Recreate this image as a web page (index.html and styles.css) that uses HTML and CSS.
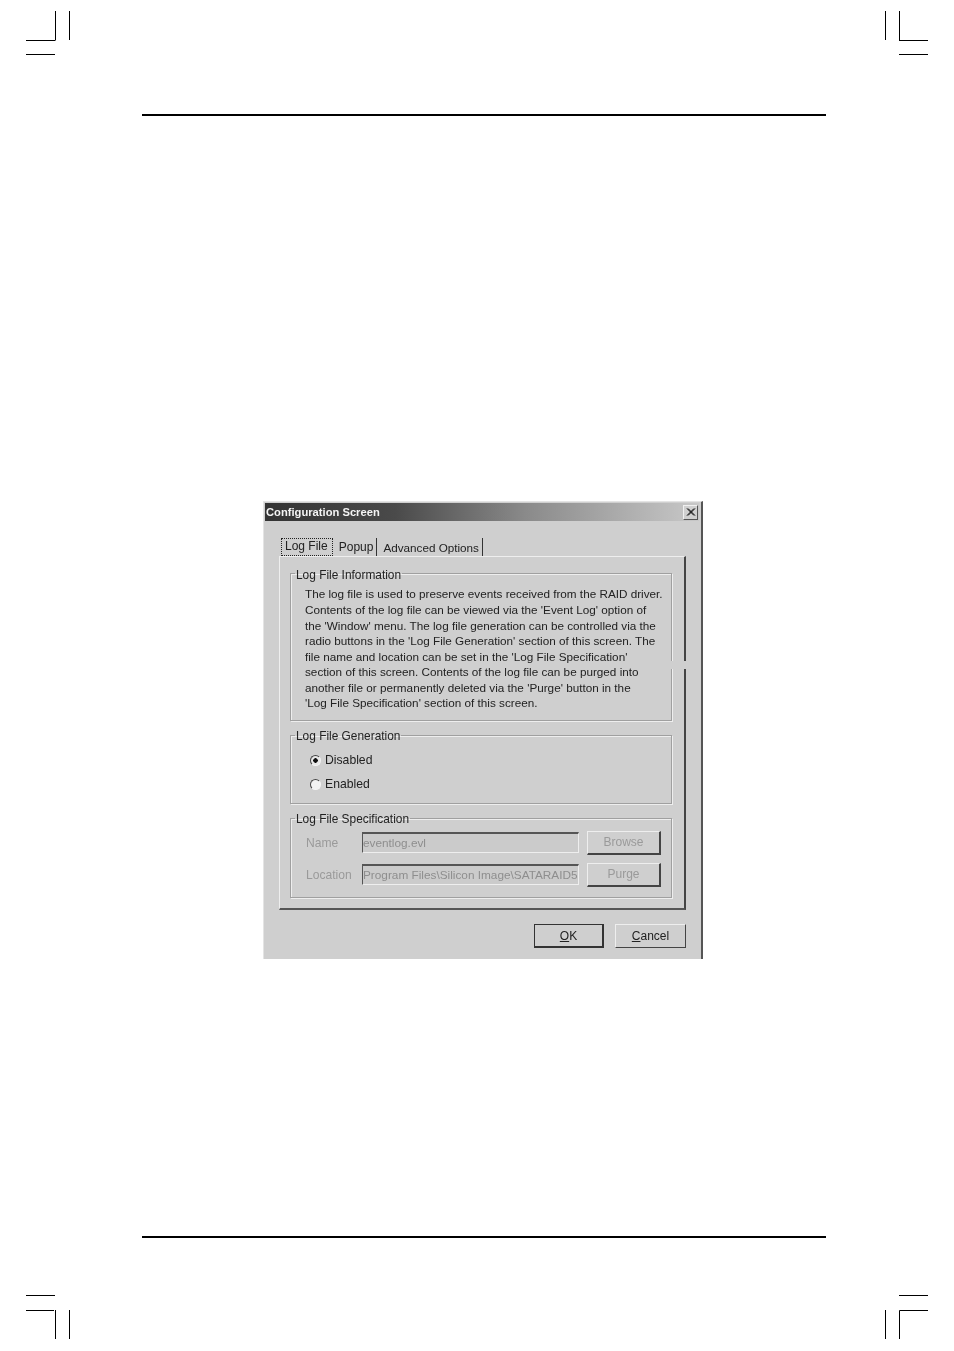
FILE: index.html
```html
<!DOCTYPE html>
<html lang="en">
<head>
<meta charset="utf-8">
<title>Configuration Screen</title>
<link rel="stylesheet" href="styles.css">
</head>
<body>
<svg class="crop-marks" width="954" height="1351" viewBox="0 0 954 1351" aria-hidden="true">
  <path d="M55.5 11V40M69.5 11V40M26 40.5H55.5M26 54.5H55M885.5 11V40M899.5 11V40.5M899 40.5H928M899 54.5H928M26 1295.5H55M26 1310.5H54M55.5 1310V1339M69.5 1310V1339M899 1295.5H928M899.5 1339V1310.5H928M885.5 1310V1339"/>
</svg>
<main class="page">
  <div class="rule rule-top"></div>
  <section class="dialog">
    <header class="titlebar">
      <span class="title">Configuration Screen</span>
      <span class="close"><svg width="11" height="10" viewBox="0 0 11 10"><path d="M2 1.5L9 8.5M3 1.5L10 8.5M9 1.5L2 8.5M10 1.5L3 8.5"/></svg></span>
    </header>
    <div class="tabs">
      <span class="tab-active"><span class="focus">Log File</span></span>
      <span class="tab tab-popup">Popup</span>
      <span class="tab tab-adv">Advanced Options</span>
    </div>
    <div class="panel">
      <fieldset class="group group-info">
        <legend>Log File Information</legend>
        <p class="info">The log file is used to preserve events received from the RAID driver.<br>Contents of the log file can be viewed via the 'Event Log' option of<br>the 'Window' menu. The log file generation can be controlled via the<br>radio buttons in the 'Log File Generation' section of this screen. The<br>file name and location can be set in the 'Log File Specification'<br>section of this screen. Contents of the log file can be purged into<br>another file or permanently deleted via the 'Purge' button in the<br>'Log File Specification' section of this screen.</p>
      </fieldset>
      <fieldset class="group group-gen">
        <legend>Log File Generation</legend>
        <div class="radio"><span class="dot checked"></span>Disabled</div>
        <div class="radio"><span class="dot"></span>Enabled</div>
      </fieldset>
      <fieldset class="group group-spec">
        <legend>Log File Specification</legend>
        <div class="row">
          <span class="field-label">Name</span>
          <span class="input">eventlog.evl</span>
          <span class="btn-disabled">Browse</span>
        </div>
        <div class="row">
          <span class="field-label">Location</span>
          <span class="input input-clip">Program Files\Silicon Image\SATARAID5</span>
          <span class="btn-disabled">Purge</span>
        </div>
      </fieldset>
    </div>
    <div class="actions">
      <span class="btn btn-default"><u>O</u>K</span>
      <span class="btn"><u>C</u>ancel</span>
    </div>
    <div class="scan-gap"></div>
  </section>
  <div class="rule rule-bottom"></div>
</main>
</body>
</html>
```
FILE: styles.css
```css
html, body { margin: 0; padding: 0; background: #fff; }
body { width: 954px; height: 1351px; overflow: hidden; position: relative; }
.crop-marks { position: absolute; left: 0; top: 0; }
.crop-marks path { stroke: #000; stroke-width: 1; fill: none; }
.page { padding-top: 114px; }
.rule { height: 2px; width: 684px; margin-left: 142px; background: #000; }
.dialog {
  position: relative;
  box-sizing: border-box;
  width: 440px; height: 458px;
  margin: 385px 0 277px 263px;
  padding: 1px 2px 0 1px;
  background: #cfcfcf;
  border-right: 2px solid #555;
  border-left: 1px solid #e4e4e4;
  border-top: 1px solid #e4e4e4;
  font: 12px/15.4px "Liberation Sans", Arial, sans-serif;
  color: #222;
  filter: blur(0.4px);
}
.titlebar {
  display: flex; align-items: center; justify-content: space-between;
  height: 18px; padding: 0 1px 0 1px;
  background: linear-gradient(90deg, #333 0, #4a4a4a 30%, #8a8a8a 60%, #c8c8c8 100%);
}
.title { color: #f4f4f4; font-weight: bold; font-size: 11.2px; padding-top: 1px; }
.close {
  display: flex; align-items: center; justify-content: center;
  width: 15px; height: 15px; box-sizing: border-box;
  background: #d0d0d0;
  border: 1px solid; border-color: #f0f0f0 #555 #555 #f0f0f0;
}
.close path { stroke: #111; stroke-width: 1; fill: none; }
.tabs { display: flex; align-items: flex-end; height: 35px; margin-left: 16px; }
.tab { height: 18px; line-height: 19px; border-right: 1px solid #333; box-sizing: border-box; }
.tab-active { display: block; height: 18px; }
.focus { display: block; box-sizing: border-box; padding: 0 4px 0 3px; height: 18px; line-height: 14px; border: 1px dotted #222; }
.tab-popup { padding: 0 3px 0 6px; }
.tab-adv { padding: 0 3px 0 6px; font-size: 11.7px; }
.panel {
  box-sizing: border-box;
  width: 407px; height: 354px;
  margin-left: 14px;
  padding: 9px 12px 0 10px;
  border: 1px solid; border-color: #eee #444 #555 #eee;
  border-width: 1px 2px 2px 1px;
}
.group {
  margin: 0 0 7px; padding: 0; min-width: 0;
  border: 1px solid #a0a0a0;
  box-shadow: 1px 1px 0 #eee, inset 1px 1px 0 #eee;
}
.group legend { margin-left: 4px; padding: 0 1px; color: #222; font-size: 11.9px; transform: translateY(1px); }
.group-info legend { transform: translateY(2px); }
.group-info { height: 153px; }
.group-gen { height: 74px; }
.group-spec { height: 85px; margin-bottom: 0; }
.info { margin: 5px 0 0 14px; font-size: 11.72px; line-height: 15.55px; white-space: nowrap; }
.radio { display: flex; align-items: center; height: 24px; margin-left: 19px; font-size: 12.2px; }
.radio:first-of-type { margin-top: 5px; }
.dot {
  display: block; width: 11px; height: 11px; margin-right: 4px; border-radius: 50%;
  border: 1px solid; border-color: #444 #f4f4f4 #f4f4f4 #444;
  background: #f2f2f2; box-sizing: border-box;
}
.dot.checked { background: radial-gradient(circle, #111 0, #111 2px, #e8e8e8 2.5px); }
.row { display: flex; align-items: center; height: 32px; margin-left: 15px; }
.field-label { width: 56px; color: #9a9a9a; font-size: 12.1px; margin-top: 2px; }
.input {
  display: block; box-sizing: border-box; width: 217px; height: 21px; line-height: 19px; padding-left: 0;
  border: 1px solid; border-color: #555 #eee #eee #555; border-width: 2px 1px 1px 1px;
  color: #8e8e8e; background: #cbcbcb; white-space: nowrap; overflow: hidden; font-size: 11.8px;
}
.btn-disabled {
  display: block; box-sizing: border-box; width: 74px; height: 24px; line-height: 20px; margin: 2px 0 0 8px;
  text-align: center; color: #9a9a9a; font-size: 12px;
  border: 1px solid; border-color: #eee #444 #444 #eee; border-width: 1px 2px 2px 1px;
}
.actions { display: flex; justify-content: flex-end; gap: 11px; margin: 14px 13px 0 0; }
.btn {
  display: block; box-sizing: border-box; width: 71px; height: 24px; line-height: 22px; text-align: center; font-size: 12px;
  border: 1px solid; border-color: #eee #444 #444 #eee;
}
.btn-default { width: 70px; border: 2px solid #333; border-top-width: 1px; border-left-width: 1px; }
.scan-gap { position: absolute; left: 407px; top: 159px; width: 18px; height: 8px; background: #cfcfcf; }
```
